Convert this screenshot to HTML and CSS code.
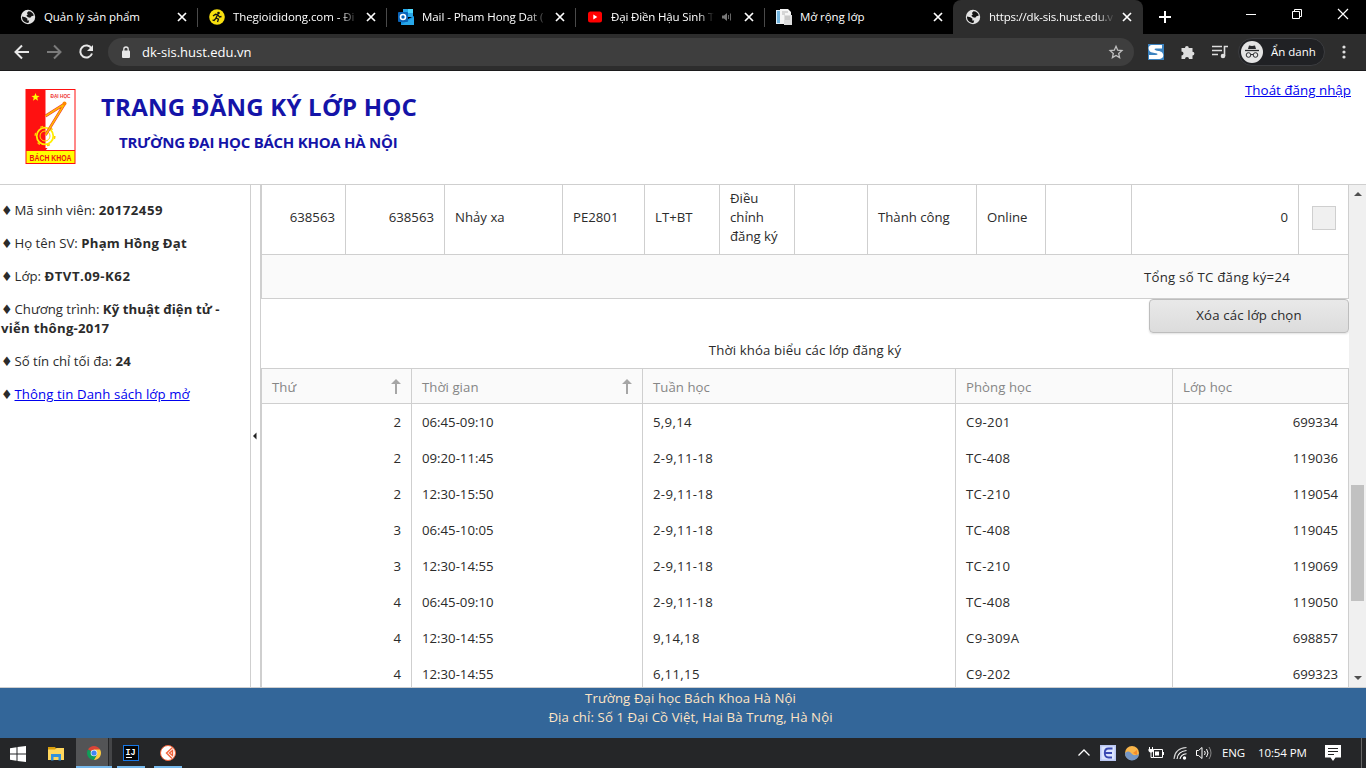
FILE: index.html
```html
<!DOCTYPE html>
<html lang="vi">
<head>
<meta charset="utf-8">
<title>Trang đăng ký lớp học</title>
<link rel="stylesheet" href="styles.css">
</head>
<body>
<svg class="defs" width="0" height="0">
  <symbol id="x" viewBox="0 0 10 10"><path d="M1 1l8 8M9 1l-8 8" stroke="#fff" stroke-width="1.7" fill="none"/></symbol>
  <symbol id="globe" viewBox="0 0 16 16"><circle cx="8" cy="8" r="7.2" fill="#e3e3e3"/><path d="M8.5 2.2c2.500 0 4.800 1.700 5.300 4.300l-2.300.7-1.300 1.600-2.200-.6-1.700-1.400 1.500-1.300-.9-1.400zM2 7.600l3.400.6 2.100 1.600-.3 1.600 2 .2-.8 2.300C4.700 14.200 1.800 11.500 2 7.600z" fill="#141414"/></symbol>
  <symbol id="up" viewBox="0 0 10 16"><path d="M5 0l5 5H6v10H4V5H0z" fill="#a6a6a6"/></symbol>
</svg>

<header class="tabs">
  <div class="tab"><svg class="fav"><use href="#globe"/></svg><span class="label">Quản lý sản phẩm</span><svg class="close"><use href="#x"/></svg></div>
  <div class="tab"><svg class="fav" viewBox="0 0 16 16"><circle cx="8" cy="8" r="7.800" fill="#f8e00f"/><circle cx="9.500" cy="4" r="1.300" fill="#111"/><path d="M8.800 5.500L7 9l2.500 1.200L8.500 13M7.200 9L5 11.500 3.500 11M4 7L6.500 5.300l2.500.5L10.500 8l2-.5" stroke="#111" stroke-width="1.300" fill="none"/></svg><span class="label fade">Thegioididong.com - Đi</span><svg class="close"><use href="#x"/></svg></div>
  <div class="tab"><svg class="fav" viewBox="0 0 16 16"><path d="M5 0h10v8H5z" fill="#28a8ea"/><path d="M10 0h5v4h-5z" fill="#50d9ff"/><path d="M3 7l7 3 6-3v9H3z" fill="#1490df"/><path d="M3 16l13-8v8z" fill="#28a8ea"/><rect y="3" width="10" height="10" rx="1" fill="#0a64b8"/><circle cx="5" cy="8" r="2.500" fill="none" stroke="#fff" stroke-width="1.600"/></svg><span class="label fade">Mail - Pham Hong Dat (</span><svg class="close"><use href="#x"/></svg></div>
  <div class="tab"><svg class="fav" viewBox="0 0 16 16"><rect x="1" y="2.500" width="14" height="11" rx="2.500" fill="#f00"/><path d="M6.300 5.600v4.800l4-2.400z" fill="#fff"/></svg><span class="label fade short">Đại Điền Hậu Sinh T</span><svg class="sound" viewBox="0 0 10 10"><path d="M0 3.500h2L5 1v8L2 6.500H0z" fill="#777"/><path d="M6.500 3v4M8.500 1.500v7" stroke="#666"/></svg><svg class="close"><use href="#x"/></svg></div>
  <div class="tab"><svg class="fav" viewBox="0 0 16 16"><path d="M0 1h5v14H0z" fill="#dceef9"/><path d="M1 2h3v12H1z" fill="#72b5df"/><path d="M4 0h8l3 3v12H4z" fill="#f5f5f5"/><path d="M8 6h8v10H8z" fill="#ddd"/><path d="M6 3h6M6 5h3M9 8h5M9 10h5" stroke="#b5b5b5"/></svg><span class="label">Mở rộng lớp</span><svg class="close"><use href="#x"/></svg></div>
  <div class="tab active"><svg class="fav"><use href="#globe"/></svg><span class="label fade">https://dk-sis.hust.edu.v</span><svg class="close"><use href="#x"/></svg></div>
  <svg class="new" viewBox="0 0 12 12"><path d="M6 0v12M0 6h12" stroke="#fff" stroke-width="2"/></svg>
  <div class="win">
    <svg width="46" height="28"><path d="M18 14.500h10" stroke="#fff"/></svg>
    <svg width="46" height="28"><path d="M18.500 11.500h7v7h-7zM20.500 11.500v-2h7v7h-2" stroke="#fff" fill="none"/></svg>
    <svg width="46" height="28"><path d="M18 9l10 10M28 9l-10 10" stroke="#fff" stroke-width="1.200"/></svg>
  </div>
</header>

<nav class="toolbar">
  <svg class="navi" viewBox="0 0 16 16"><path d="M15 8H2M8 1.500L1.500 8 8 14.500" stroke="#e8e8e8" stroke-width="2" fill="none"/></svg>
  <svg class="navi" viewBox="0 0 16 16"><path d="M1 8h13M8 1.500L14.500 8 8 14.500" stroke="#7b7b7b" stroke-width="2" fill="none"/></svg>
  <svg class="navi" viewBox="0 0 16 16"><path d="M13.500 4.500A6 6 0 1 0 14 9.500" stroke="#e8e8e8" stroke-width="2" fill="none"/><path d="M15 1v6H9z" fill="#e8e8e8"/></svg>
  <div class="omni">
    <svg width="10" height="13" viewBox="0 0 10 13"><rect x="1" y="4.500" width="8" height="7.500" rx="1" fill="#e8e8e8"/><path d="M2.800 5V3.200a2.200 2.200 0 0 1 4.400 0V5" stroke="#e8e8e8" stroke-width="1.300" fill="none"/></svg>
    <span class="url">dk-sis.hust.edu.vn</span>
    <svg class="star" viewBox="0 0 16 16"><path d="M8 2.300l1.700 3.900 4.200.4-3.200 2.800.9 4.200L8 11.500l-3.600 2.100.9-4.200-3.200-2.800 4.200-.4z" stroke="#c0c0c0" stroke-width="1.300" fill="none"/></svg>
  </div>
  <div class="ext">
    <svg width="16" height="16"><rect width="16" height="16" fill="#3b82bf"/><path d="M14 1H5C1 1 0 3 1 6s5 2.500 8 3.500c1 .6.500 1.500-1 1.500H1v4h9c4 0 6-2 5-5s-4-3-7-3.600C6 6 6 4.600 8 4.600h6z" fill="#fff"/></svg>
    <svg width="16" height="16" viewBox="0 0 16 16"><path d="M1.500 4H5a1.900 1.900 0 1 1 3.800 0h3.700v3.700a1.900 1.900 0 1 1 0 3.800V15H9a2 2 0 1 0-4 0H1.500v-3.500a2 2 0 1 0 0-4z" fill="#dedede"/></svg>
    <svg width="17" height="14" viewBox="0 0 17 14"><path d="M0 1.500h10M0 5.500h10M0 9.500h6M12.500 11V1.500h3.500" stroke="#dedede" stroke-width="1.600" fill="none"/><circle cx="11" cy="11" r="2.300" fill="#dedede"/></svg>
  </div>
  <div class="profile">
    <svg width="22" height="22" viewBox="0 0 22 22"><circle cx="11" cy="11" r="11" fill="#e4e4e4"/><path d="M4 9.500h14" stroke="#292a2d" stroke-width="1.300"/><path d="M7 8l1-3.500 3 .6 3-.6L15 8z" fill="#292a2d"/><g fill="none" stroke="#292a2d"><circle cx="7.500" cy="14" r="2.300"/><circle cx="14.500" cy="14" r="2.300"/><path d="M10 13.500h2"/></g></svg>
    <span>Ẩn danh</span>
  </div>
  <svg class="dots" viewBox="0 0 4 14"><circle cx="2" cy="2" r="1.600"/><circle cx="2" cy="7" r="1.600"/><circle cx="2" cy="12" r="1.600"/></svg>
</nav>

<section class="banner">
  <svg class="logo" viewBox="0 0 50 75">
    <path d="M0 0h50v75H0z" fill="#f11"/><path d="M20 1h29v60H20z" fill="#fff"/><path d="M1 62h48v12H1z" fill="#ff0"/>
    <path d="M10 4l1.100 2.800 3 .1-2.400 1.900.9 2.900L10 10l-2.600 1.700.9-2.900L5.900 6.900l3-.1z" fill="#ff0"/>
    <g fill="none"><circle cx="19.500" cy="47" r="8.300" stroke="#fe0" stroke-width="1.800"/><circle cx="19.500" cy="47" r="9.800" stroke="#fc0" stroke-width="1.500" stroke-dasharray="3 7.260"/><circle cx="19.500" cy="47" r="5" stroke="#fd0" stroke-width="1"/><path d="M20 27l19-12-19 31" stroke="#e33" stroke-width="2.700"/><path d="M20 27l19-12-19 31" stroke="#fb0" stroke-width="1.500"/></g>
    <circle cx="39" cy="14.500" r="2" fill="#f80"/><path d="M17 59l2.500 3 2.500-3z" fill="#f11"/>
    <text x="25" y="9" textLength="20" lengthAdjust="spacingAndGlyphs" class="logo-s">ĐẠI HỌC</text><text x="4" y="71.800" textLength="42" lengthAdjust="spacingAndGlyphs" class="logo-b">BÁCH KHOA</text>
  </svg>
  <div class="titles"><h1>TRANG ĐĂNG KÝ LỚP HỌC</h1><h2>TRƯỜNG ĐẠI HỌC BÁCH KHOA HÀ NỘI</h2></div>
  <a class="logout" href="#">Thoát đăng nhập</a>
</section>

<main class="body">
  <aside class="side">
    <p><i>♦</i>Mã sinh viên: <b class="id">20172459</b></p>
    <p><i>♦</i>Họ tên SV: <b>Phạm Hồng Đạt</b></p>
    <p><i>♦</i>Lớp: <b class="id">ĐTVT.09-K62</b></p>
    <p><i>♦</i>Chương trình: <b><span class="tight">Kỹ thuật điện tử -</span><br>viễn thông-2017</b></p>
    <p><i>♦</i>Số tín chỉ tối đa: <b>24</b></p>
    <p><i>♦</i><a href="#">Thông tin Danh sách lớp mở</a></p>
  </aside>
  <div class="split"><svg width="4" height="8"><path d="M3.500 .5v7L0 4z" fill="#222"/></svg></div>
  <div class="content">
    <div class="reg">
      <div class="num">638563</div><div class="num">638563</div><div>Nhảy xa</div><div>PE2801</div><div>LT+BT</div><div>Điều<br>chỉnh<br>đăng ký</div><div></div><div>Thành công</div><div>Online</div><div></div><div class="num">0</div><div class="chk"><span></span></div>
    </div>
    <div class="total"><span>Tổng số TC đăng ký=24</span></div>
    <button class="del">Xóa các lớp chọn</button>
    <div class="caption">Thời khóa biểu các lớp đăng ký</div>
    <div class="row head"><div>Thứ<svg><use href="#up"/></svg></div><div>Thời gian<svg><use href="#up"/></svg></div><div>Tuần học</div><div>Phòng học</div><div>Lớp học</div></div>
    <div class="row"><div class="num">2</div><div>06:45-09:10</div><div class="wide">5,9,14</div><div class="wide">C9-201</div><div class="num">699334</div></div>
    <div class="row"><div class="num">2</div><div>09:20-11:45</div><div class="wide">2-9,11-18</div><div class="wide">TC-408</div><div class="num">119036</div></div>
    <div class="row"><div class="num">2</div><div>12:30-15:50</div><div class="wide">2-9,11-18</div><div class="wide">TC-210</div><div class="num">119054</div></div>
    <div class="row"><div class="num">3</div><div>06:45-10:05</div><div class="wide">2-9,11-18</div><div class="wide">TC-408</div><div class="num">119045</div></div>
    <div class="row"><div class="num">3</div><div>12:30-14:55</div><div class="wide">2-9,11-18</div><div class="wide">TC-210</div><div class="num">119069</div></div>
    <div class="row"><div class="num">4</div><div>06:45-09:10</div><div class="wide">2-9,11-18</div><div class="wide">TC-408</div><div class="num">119050</div></div>
    <div class="row"><div class="num">4</div><div>12:30-14:55</div><div class="wide">9,14,18</div><div class="wide">C9-309A</div><div class="num">698857</div></div>
    <div class="row"><div class="num">4</div><div>12:30-14:55</div><div class="wide">6,11,15</div><div class="wide">C9-202</div><div class="num">699323</div></div>
  </div>
  <div class="scroll">
    <svg width="8" height="4"><path d="M0 4l4-4 4 4z" fill="#505050"/></svg>
    <div class="thumb"></div>
    <svg width="8" height="4"><path d="M0 0l4 4 4-4z" fill="#505050"/></svg>
  </div>
</main>

<footer class="foot">Trường Đại học Bách Khoa Hà Nội<br>Địa chỉ: Số 1 Đại Cồ Việt, Hai Bà Trưng, Hà Nội</footer>

<div class="taskbar">
  <div class="app start"><svg width="16" height="16"><path d="M0 2.200L6.500 1.300v6.200H0zM7.500 1.100L16 0v7.500H7.500zM0 8.500h6.500v6.200L0 13.800zM7.500 8.500H16V16l-8.500-1.100z" fill="#fff"/></svg></div>
  <div class="app files"><svg width="16" height="15"><path d="M0 1h7l1.500 2v4H0z" fill="#d99e0b"/><path d="M0 3.500h7L8.500 2H16v12H0z" fill="#ffd75e"/><path d="M3 8h10v6.500h-2.500V11h-5v3.500H3z" fill="#3291dc"/></svg></div>
  <div class="app chrome"><svg width="14" height="14" viewBox="0 0 14 14"><path d="M7 7L.94 3.500A7 7 0 0 1 13.060 3.500z" fill="#db4437"/><path d="M7 7L.94 3.500A7 7 0 0 0 7 14l3-5z" fill="#0f9d58"/><path d="M7 3.500h6.060A7 7 0 0 1 7 14l3.200-5.500z" fill="#ffcd40"/><circle cx="7" cy="7" r="3.300" fill="#f1f1f1"/><circle cx="7" cy="7" r="2.600" fill="#4285f4"/></svg></div>
  <div class="app run ij"><svg width="16" height="16"><rect x=".5" y=".5" width="15" height="15" fill="#050505" stroke="#1778e8"/><path d="M3 12.500h6" stroke="#fff"/><text x="2.500" y="9.500" class="ijt">IJ</text></svg></div>
  <div class="app run orange"><svg width="16" height="16"><circle cx="8" cy="8" r="7.500" fill="#fff" stroke="#f2633a"/><path d="M12.500 2.500L6.500 8l5.500 5.500M12.500 5.500v5L9.500 8z" stroke="#f2633a" stroke-width="1.400" fill="none"/></svg></div>
  <div class="tray">
    <svg width="24" height="16"><path d="M6.500 10.500L12 5l5.500 5.500" stroke="#fff" stroke-width="1.300" fill="none"/></svg>
    <svg width="24" height="16"><rect x="4" width="16" height="16" fill="#b9c6f2"/><rect x="5.500" y="1.500" width="13" height="13" fill="#dbe5ff"/><path d="M16.500 3.500h-4c-5 0-5 9 0 9h3.500M8.500 8H16" stroke="#3949b2" stroke-width="1.800" fill="none"/></svg>
    <svg width="24" height="16"><circle cx="12" cy="8" r="7" fill="#f9b54a"/><path d="M5 8c4-3 5-1 7 1s5 1 7 0a7 7 0 0 1-14-1z" fill="#7596c5"/><path d="M13 8l4-3v5z" fill="#f58a2c"/></svg>
    <svg width="24" height="16"><path d="M9.500 4.500h9v8h-9zM19.500 7v3M5.500 2v2M8.500 2v2M7 7v5.500h2.500" fill="none" stroke="#fff"/><path d="M4.500 4h5v2L8 7.500H6L4.500 6zM11 6.500h4v4h-4z" fill="#fff"/></svg>
    <svg width="25" height="16"><g fill="none" stroke="#fff" stroke-width="1.100"><path d="M6 14C6.500 7 11 3 18.500 2.500" opacity=".8"/><path d="M9 14c.5-5 4-8 9.500-8.500M12 14c.5-3 3-5 6.500-5.300"/></g><circle cx="16.500" cy="13" r="1.700" fill="#fff"/></svg>
    <svg width="23" height="16"><path d="M3.500 5.500h2L9 2.500v11L5.500 10.500h-2z" stroke="#fff" fill="none"/><path d="M11.500 6q1.500 2 0 4M13.500 4q3 4 0 8" stroke="#fff" fill="none"/><path d="M16 2q4 6 0 12" stroke="#888" fill="none"/></svg>
    <span class="lang">ENG</span><span class="time">10:54 PM</span>
    <svg class="note" width="16" height="16"><path d="M0 0h16v12.500h-5.500L8 16l-2.500-3.500H0z" fill="#fff"/><path d="M3 3.500h10M3 6.500h10M3 9.500h6" stroke="#222"/></svg>
    <span class="peek"></span>
  </div>
</div>
</body>
</html>
```
FILE: styles.css
```css
* { box-sizing: border-box; }
body { margin: 0; width: 1366px; height: 768px; overflow: hidden; display: flex; flex-direction: column; background: #fff; color: #2b2b2b; font: 13.2px/19px "Open Sans", "Noto Sans", sans-serif; }
svg { display: block; flex: none; }
.defs { position: absolute; }
p, h1, h2 { margin: 0; }
a { color: #0000ee; }

/* browser tabs */
.tabs { height: 34px; flex: none; background: #000; display: flex; padding-left: 8px; color: #fff; font-size: 11.5px; }
.tab { width: 189px; display: flex; align-items: center; padding: 0 10px 0 12px; position: relative; flex: none; }
.tab:not(.active):not(:nth-child(5))::after { content: ""; position: absolute; right: -1px; top: 8px; width: 1px; height: 19px; background: #4a4a4a; }
.fav { width: 16px; height: 16px; margin-right: 8px; }
.label { width: 126px; white-space: nowrap; letter-spacing: -.08px; padding-bottom: 2px; }
.label.short { width: 104px; letter-spacing: -.15px; }
.fade { -webkit-mask-image: linear-gradient(to right, #000 85%, transparent); mask-image: linear-gradient(to right, #000 85%, transparent); }
.active .fade { letter-spacing: -.2px; }
.close { width: 10px; height: 10px; margin-left: 8px; }
.sound { width: 10px; height: 10px; margin-left: 8px; }
.tab .sound + .close { margin-left: 12px; }
.active { width: 190px; background: #2d2d2d; border-radius: 8px 8px 0 0; }
.active .close { margin-left: 7px; }
.new { width: 12px; height: 12px; margin: 11px 0 0 16px; }
.win { display: flex; margin-left: auto; }

/* address bar */
.toolbar { height: 37px; flex: none; background: #2d2d2d; border-bottom: 1px solid #1c1b1d; display: flex; align-items: center; padding-left: 14px; color: #fff; }
.navi { width: 16px; height: 16px; margin-right: 16px; }
.omni { width: 1026px; height: 28px; margin-left: -2px; border-radius: 14px; background: #3e3e3e; display: flex; align-items: center; padding: 0 10px 0 13px; }
.url { margin-left: 11px; font-size: 13px; }
.star { width: 16px; height: 16px; margin-left: auto; }
.ext { display: flex; align-items: center; gap: 16px; margin-left: 14px; }
.profile { width: 87px; height: 28px; margin-left: 9px; border: 1px solid #3c3d40; border-radius: 14px; background: #202124; display: flex; align-items: center; gap: 8px; padding-left: 2px; font-size: 11.5px; }
.profile span { padding-bottom: 1px; }
.dots { width: 4px; height: 14px; margin-left: 17px; fill: #dedede; }

/* page banner */
.banner { height: 114px; flex: none; border-bottom: 1px solid #cfcfcf; display: flex; padding-left: 25px; }
.logo { width: 51px; height: 75px; margin-top: 18px; }
.logo-s { font: bold 5px "Liberation Sans", sans-serif; fill: #e33; }
.logo-b { font: bold 9px "Liberation Sans", sans-serif; fill: #e11; }
.titles { margin-left: 25px; color: #1414a8; white-space: nowrap; }
h1 { font-size: 24px; line-height: 32px; margin-top: 20px; letter-spacing: .22px; }
h2 { font-size: 15px; line-height: 20px; margin: 9px 0 0 18px; letter-spacing: -.25px; }
.logout { margin: 10px 15px 0 auto; font-size: 13.4px; white-space: nowrap; }

/* page body */
.body { height: 503px; flex: none; display: flex; overflow: hidden; border-bottom: 1px solid #cfcfcf; }
.side { width: 251px; border-right: 1px solid #cfcfcf; padding: 16px 0 0 1px; white-space: nowrap; flex: none; }
.side p { margin-bottom: 14px; }
.side i { display: inline-block; width: 13.500px; font: 13px/19px "DejaVu Sans", sans-serif; }
.side b { letter-spacing: .25px; }
.side b.id { letter-spacing: .5px; }
.side .tight { letter-spacing: .05px; }
.side a { letter-spacing: .1px; }
.split { width: 9px; display: flex; align-items: center; padding-left: 2px; flex: none; }
.content { width: 1089px; border-left: 1px solid #cfcfcf; flex: none; display: flex; flex-direction: column; }
.reg { display: grid; grid-template-columns: 84px 99px 118px 82px 75px 75px 73px 109px 69px 86px 167px 50px; height: 70px; flex: none; border-left: 1px solid #cfcfcf; border-bottom: 1px solid #cfcfcf; }
.reg > div, .row > div { border-right: 1px solid #cfcfcf; display: flex; align-items: center; padding: 0 10px; white-space: nowrap; }
.reg > div { padding-bottom: 5px; }
.reg .num, .row .num { justify-content: flex-end; }
.reg .chk { padding: 0; justify-content: center; padding-bottom: 3px; }
.chk span { width: 24px; height: 24px; border: 1px solid #cfcfcf; background: #f0f0f0; }
.total { height: 44px; flex: none; border: 1px solid #cfcfcf; border-top: 0; background: #fafafa; display: flex; align-items: center; justify-content: flex-end; padding: 2px 58px 0 0; letter-spacing: .25px; }
.del { width: 200px; height: 34px; flex: none; margin: 0; padding: 0 6px 2px; align-self: flex-end; border: 1px solid #bdbdbd; border-radius: 4px; background: linear-gradient(#e9e9e9, #dcdcdc); box-shadow: 0 1px 2px rgba(0,0,0,.12); color: #2b2b2b; font: inherit; letter-spacing: .15px; }
.caption { height: 35px; line-height: 35px; flex: none; text-align: center; letter-spacing: .14px; }
.row { display: grid; grid-template-columns: 150px 231px 313px 217px 176px; height: 36px; flex: none; border-left: 1px solid #cfcfcf; }
.row .wide { letter-spacing: .32px; }
.head { border-top: 1px solid #cfcfcf; border-bottom: 1px solid #cfcfcf; background: #fafafa; color: #868686; }
.head > div { padding-top: 2px; letter-spacing: .05px; }
.head svg { width: 10px; height: 16px; margin-left: auto; }
.scroll { width: 17px; background: #f0f0f0; display: flex; flex-direction: column; align-items: center; padding: 7px 0; }
.thumb { width: 13px; height: 116px; background: #c1c1c1; margin: 289px 0 75px; flex: none; }

.foot { height: 50px; flex: none; background: #336699; color: #ffe4c4; text-align: center; padding: 1px 0 0 15px; letter-spacing: .1px; }

/* taskbar */
.taskbar { height: 30px; flex: none; background: #252628; display: flex; color: #fff; font-size: 11.5px; }
.app { display: flex; align-items: center; justify-content: center; }
.start { width: 36px; }
.files { width: 40px; padding-right: 0; }
.chrome { width: 36px; background: linear-gradient(to right, #535456 32px, #252628 32px, #252628 33px, #444547 33px); border-bottom: 2px solid #76b9ed; }
.run { width: 28px; border-bottom: 2px solid #76b9ed; }
.app svg { margin-top: 1px; }
.files svg { margin-top: 0; }
.ij { margin-left: 5px; }
.orange { margin-left: 9px; }
.ijt { font: bold 8.500px "Liberation Mono", monospace; fill: #fff; }
.tray { margin-left: auto; width: 294px; display: flex; align-items: center; }
.lang, .time { padding-bottom: 1px; letter-spacing: -.1px; }
.lang { margin-left: 6px; width: 36px; }
.time { width: 67px; white-space: nowrap; }
.peek { width: 1px; height: 30px; background: #666; margin-left: 20px; }
```
